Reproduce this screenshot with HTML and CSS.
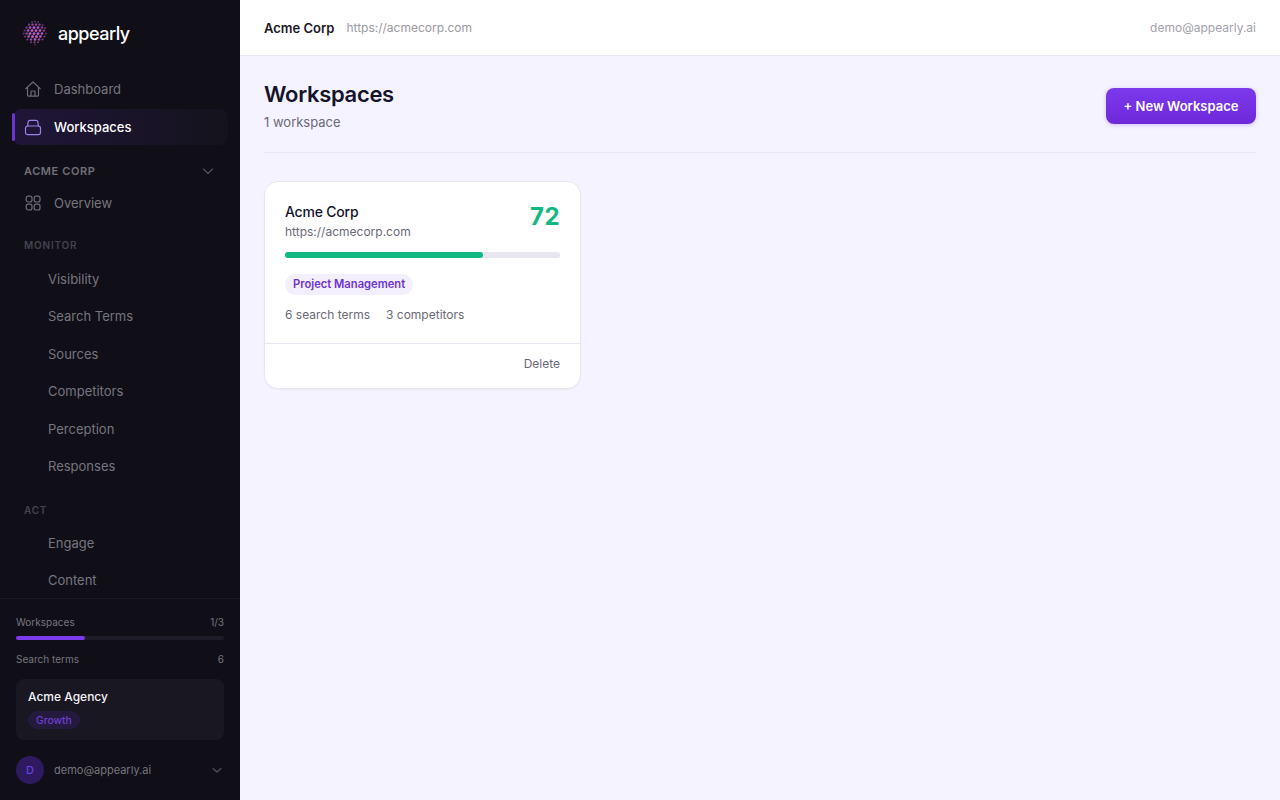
FILE: index.html
```html
<!DOCTYPE html>
<html lang="en">
<head>
	<meta charset="UTF-8">
	<title>Workspaces - appearly</title>
	<link rel="stylesheet" href="styles.css">
</head>
<body>
<div class="app">
	<aside class="sidebar">
		<div class="logo">
			<svg class="logo_mark" width="26" height="26" viewBox="0 0 26 26">
				<defs>
					<linearGradient id="logoGrad" x1="0" y1="0.1" x2="0.6" y2="1">
						<stop offset="0" stop-color="#2f3fe0"/>
						<stop offset="0.5" stop-color="#b85fd8"/>
						<stop offset="1" stop-color="#e0406a"/>
					</linearGradient>
					<radialGradient id="logoFade">
						<stop offset="0.45" stop-color="#100f17" stop-opacity="0"/>
						<stop offset="1" stop-color="#100f17" stop-opacity="0.65"/>
					</radialGradient>
				</defs>
				<g fill="url(#logoGrad)">
					<circle cx="10" cy="2" r="1"/><circle cx="13" cy="1.6" r="1"/><circle cx="16" cy="2" r="1"/>
					<circle cx="7" cy="4.5" r="1.2"/><circle cx="10.5" cy="4.5" r="1.3"/><circle cx="14" cy="4.5" r="1.3"/><circle cx="17.5" cy="4.5" r="1.2"/><circle cx="20.5" cy="5" r="1"/>
					<circle cx="4.5" cy="7.5" r="1.2"/><circle cx="8" cy="7.5" r="1.4"/><circle cx="12" cy="7.5" r="1.5"/><circle cx="16" cy="7.5" r="1.4"/><circle cx="20" cy="7.5" r="1.3"/><circle cx="23" cy="8" r="1"/>
					<circle cx="2.5" cy="10.5" r="1.1"/><circle cx="6" cy="10.5" r="1.4"/><circle cx="10" cy="10.5" r="1.5"/><circle cx="14" cy="10.5" r="1.5"/><circle cx="18" cy="10.5" r="1.4"/><circle cx="22" cy="10.5" r="1.2"/>
					<circle cx="1.5" cy="13.5" r="1"/><circle cx="4.5" cy="13.5" r="1.3"/><circle cx="8" cy="13.5" r="1.5"/><circle cx="12" cy="13.5" r="1.5"/><circle cx="16" cy="13.5" r="1.5"/><circle cx="20" cy="13.5" r="1.4"/><circle cx="24" cy="13.5" r="1"/>
					<circle cx="3" cy="16.5" r="1.1"/><circle cx="6.5" cy="16.5" r="1.4"/><circle cx="10.5" cy="16.5" r="1.5"/><circle cx="14.5" cy="16.5" r="1.5"/><circle cx="18.5" cy="16.5" r="1.4"/><circle cx="22.5" cy="16.5" r="1.1"/>
					<circle cx="5.5" cy="19.5" r="1.1"/><circle cx="9" cy="19.5" r="1.3"/><circle cx="13" cy="19.5" r="1.4"/><circle cx="17" cy="19.5" r="1.3"/><circle cx="20.5" cy="19.5" r="1.1"/>
					<circle cx="9" cy="22.3" r="1"/><circle cx="12.5" cy="22.3" r="1.1"/><circle cx="16" cy="22.3" r="1"/>
					<circle cx="13" cy="24.8" r="0.9"/>
				</g>
				<circle cx="13" cy="13" r="13" fill="url(#logoFade)"/>
			</svg>
			<span class="logo_text">appearly</span>
		</div>

		<nav class="nav">
			<a class="nav_item">
				<svg class="nav_icon" viewBox="0 0 18 18" width="18" height="18"><path d="M1.800 8.600 9 2l7.200 6.600M3.500 7.200v8a1 1 0 0 0 1 1h9a1 1 0 0 0 1-1v-8M7 16.200v-4.500a.7.7 0 0 1 .7-.7h2.600a.7.7 0 0 1 .7.7v4.500"/></svg>
				Dashboard
			</a>
			<a class="nav_item active">
				<svg class="nav_icon" viewBox="0 0 18 18" width="18" height="18"><rect x="1.500" y="8" width="15" height="8.700" rx="2.200"/><path d="M3.600 8 4.100 4.200C4.250 3.100 5 2.400 6 2.400h6c1 0 1.750.7 1.900 1.800L14.400 8"/></svg>
				Workspaces
			</a>

			<div class="group_head">
				<span>ACME CORP</span>
				<svg class="chevron" viewBox="0 0 12 12" width="12" height="12"><path d="M1.500 4 6 8.500 10.500 4"/></svg>
			</div>
			<a class="nav_item overview">
				<svg class="nav_icon" viewBox="0 0 18 18" width="18" height="18"><rect x="2.200" y="2.200" width="5.800" height="5.800" rx="2"/><rect x="10.200" y="2.200" width="5.800" height="5.800" rx="2"/><rect x="2.200" y="10.200" width="5.800" height="5.800" rx="2"/><rect x="10.200" y="10.200" width="5.800" height="5.800" rx="2"/></svg>
				Overview
			</a>

			<div class="section_label">MONITOR</div>
			<a class="sub_item">Visibility</a>
			<a class="sub_item">Search Terms</a>
			<a class="sub_item">Sources</a>
			<a class="sub_item">Competitors</a>
			<a class="sub_item">Perception</a>
			<a class="sub_item">Responses</a>

			<div class="section_label act">ACT</div>
			<a class="sub_item">Engage</a>
			<a class="sub_item">Content</a>
		</nav>

		<div class="side_foot">
			<div class="usage_row"><span>Workspaces</span><span>1/3</span></div>
			<div class="usage_bar"><div class="usage_fill"></div></div>
			<div class="usage_row terms"><span>Search terms</span><span>6</span></div>

			<div class="agency">
				<div class="agency_name">Acme Agency</div>
				<span class="agency_plan">Growth</span>
			</div>

			<div class="user">
				<span class="avatar">D</span>
				<span class="user_mail">demo@appearly.ai</span>
				<svg class="chevron" viewBox="0 0 12 12" width="12" height="12"><path d="M2 4.500 6 8 10 4.500"/></svg>
			</div>
		</div>
	</aside>

	<div class="main">
		<header class="topbar">
			<strong class="top_name">Acme Corp</strong>
			<span class="top_url">https://acmecorp.com</span>
			<span class="top_mail">demo@appearly.ai</span>
		</header>

		<section class="content">
			<div class="page_head">
				<div>
					<h1>Workspaces</h1>
					<p class="page_sub">1 workspace</p>
				</div>
				<button class="btn_new">+ New Workspace</button>
			</div>

			<div class="card">
				<div class="card_body">
					<div class="card_top">
						<div>
							<div class="card_name">Acme Corp</div>
							<div class="card_url">https://acmecorp.com</div>
						</div>
						<div class="card_score">72</div>
					</div>
					<div class="score_bar"><div class="score_fill" style="width: 72%"></div></div>
					<span class="tag">Project Management</span>
					<div class="card_stats"><span>6 search terms</span><span>3 competitors</span></div>
				</div>
				<div class="card_foot"><a class="delete">Delete</a></div>
			</div>
		</section>
	</div>
</div>
</body>
</html>
```

FILE: styles.css
```css
*{
	box-sizing: border-box;
}
html, body{
	margin: 0;
	height: 100%;
}
body{
	font-family: Inter, "Liberation Sans", sans-serif;
	background: #f5f3ff;
	overflow: hidden;
}
.app{
	display: flex;
	height: 800px;
}

/* sidebar */
.sidebar{
	width: 240px;
	flex: none;
	display: flex;
	flex-direction: column;
	background: #100f17;
	color: #fff;
}
.logo{
	height: 66px;
	flex: none;
	display: flex;
	align-items: center;
	gap: 10px;
	padding-left: 22px;
}
.logo_text{
	font-size: 18px;
	font-weight: 500;
	letter-spacing: -0.5px;
}
.nav{
	flex: 1;
	min-height: 0;
	overflow: hidden;
	padding: 5px 12px 0;
}
.nav_item{
	position: relative;
	display: flex;
	align-items: center;
	gap: 12px;
	height: 36px;
	margin-bottom: 2px;
	padding-left: 12px;
	border-radius: 8px;
	font-size: 13px;
	color: #77757f;
}
.nav_item.active{
	color: #fff;
	font-weight: 500;
	border-left: 2px solid transparent;
	padding-left: 10px;
	background: linear-gradient(90deg, #201538, #14131d) padding-box;
}
.nav_item.active::before{
	content: "";
	position: absolute;
	left: -2px;
	top: 4px;
	bottom: 4px;
	width: 2.5px;
	border-radius: 2px;
	background: #6d34d0;
}
.nav_icon{
	flex: none;
	fill: none;
	stroke: #6f6d78;
	stroke-width: 1.2;
	stroke-linecap: round;
	stroke-linejoin: round;
}
.active .nav_icon{
	stroke: #9a80ee;
}
.chevron{
	flex: none;
	fill: none;
	stroke: #55535d;
	stroke-width: 1.1;
	stroke-linecap: round;
	stroke-linejoin: round;
}
.group_head{
	display: flex;
	align-items: center;
	justify-content: space-between;
	height: 20px;
	margin-top: 16px;
	padding: 0 14px 0 12px;
	font-size: 11px;
	font-weight: 600;
	letter-spacing: 0.6px;
	color: #72707a;
}
.overview{
	margin-top: 4px;
}
.section_label{
	height: 16px;
	line-height: 16px;
	margin-top: 16px;
	margin-bottom: 7.5px;
	padding-left: 12px;
	font-size: 10px;
	font-weight: 600;
	letter-spacing: 0.8px;
	color: #45434d;
}
.section_label.act{
	margin-bottom: 7px;
}
.sub_item{
	display: block;
	height: 37.5px;
	line-height: 37.5px;
	padding-left: 36px;
	font-size: 13px;
	color: #77757f;
}

/* sidebar bottom */
.side_foot{
	flex: none;
	height: 202px;
	border-top: 1px solid #1c1b25;
	padding: 16px 16px 0;
}
.usage_row{
	display: flex;
	justify-content: space-between;
	height: 14px;
	line-height: 14px;
	font-size: 10px;
	color: #77757f;
}
.usage_row.terms{
	margin-top: 12px;
}
.usage_bar{
	height: 4px;
	margin-top: 7px;
	border-radius: 2px;
	background: #1e1c28;
}
.usage_fill{
	width: 33%;
	height: 100%;
	border-radius: 2px;
	background: #7c3aed;
}
.agency{
	height: 61px;
	margin-top: 13px;
	padding: 9px 12px 0;
	border-radius: 8px;
	background: #181722;
}
.agency_name{
	height: 17px;
	line-height: 17px;
	font-size: 12px;
	font-weight: 500;
	color: #f2f1f5;
}
.agency_plan{
	display: inline-block;
	height: 18px;
	line-height: 18px;
	margin-top: 6px;
	padding: 0 8px;
	border-radius: 9px;
	font-size: 10.3px;
	font-weight: 500;
	color: #6d3fd0;
	background: #241a3e;
}
.user{
	display: flex;
	align-items: center;
	margin-top: 16px;
	padding-right: 1px;
}
.avatar{
	width: 28px;
	height: 28px;
	flex: none;
	display: flex;
	align-items: center;
	justify-content: center;
	border-radius: 50%;
	font-size: 11px;
	font-weight: 500;
	color: #6d3fe0;
	background: #2e1a5e;
}
.user_mail{
	flex: 1;
	margin-left: 10px;
	font-size: 11px;
	color: #77757f;
}

/* top bar */
.main{
	flex: 1;
	min-width: 0;
}
.topbar{
	height: 56px;
	display: flex;
	align-items: center;
	padding: 0 24px;
	background: #fff;
	border-bottom: 1px solid #e8e6f0;
}
.top_name{
	font-size: 13px;
	font-weight: 600;
	color: #1a1825;
}
.top_url{
	margin-left: 12px;
	font-size: 12px;
	color: #9b99a5;
}
.top_mail{
	margin-left: auto;
	font-size: 12px;
	color: #a3a1ad;
}

/* page */
.content{
	padding: 24px;
}
.page_head{
	display: flex;
	justify-content: space-between;
	align-items: flex-start;
	height: 73px;
	border-bottom: 1px solid #e8e6f0;
	margin-bottom: 28px;
}
h1{
	margin: 0;
	font-size: 22px;
	line-height: 28px;
	font-weight: 600;
	letter-spacing: -0.3px;
	color: #16142a;
}
.page_sub{
	margin: 6px 0 0;
	font-size: 13px;
	line-height: 16px;
	color: #6b6978;
}
.btn_new{
	width: 150px;
	height: 36px;
	margin-top: 8px;
	border: 0;
	border-radius: 8px;
	font-family: inherit;
	font-size: 13px;
	font-weight: 600;
	color: #fff;
	background: linear-gradient(180deg, #7c3aed, #6d28d9);
	box-shadow: 0 1px 4px rgba(124, 58, 237, 0.3);
}

/* card */
.card{
	width: 317px;
	height: 208px;
	background: #fff;
	border: 1px solid #e8e6f0;
	border-radius: 14px;
	box-shadow: 0 1px 2px rgba(20, 16, 50, 0.04);
}
.card_body{
	height: 162px;
	padding: 20px 20px 0;
	border-bottom: 1px solid #e8e6f0;
}
.card_top{
	display: flex;
	justify-content: space-between;
	align-items: flex-start;
}
.card_name{
	font-size: 14px;
	line-height: 20px;
	font-weight: 500;
	letter-spacing: -0.2px;
	color: #16142a;
}
.card_url{
	margin-top: 2px;
	font-size: 12px;
	line-height: 16px;
	color: #6b6978;
}
.card_score{
	font-size: 24px;
	line-height: 30px;
	font-weight: 700;
	letter-spacing: 0.5px;
	color: #10b981;
}
.score_bar{
	height: 6px;
	margin-top: 12px;
	border-radius: 3px;
	background: #e8e6f0;
}
.score_fill{
	height: 100%;
	border-radius: 3px;
	background: #10b981;
}
.tag{
	display: inline-block;
	height: 21px;
	line-height: 21px;
	margin-top: 16px;
	padding: 0 8px;
	border-radius: 11px;
	font-size: 11.2px;
	font-weight: 600;
	color: #6d34d0;
	background: #f3effe;
}
.card_stats{
	display: flex;
	gap: 16px;
	margin-top: 12px;
	font-size: 12px;
	line-height: 16px;
	color: #6b6978;
}
.card_foot{
	display: flex;
	justify-content: flex-end;
	align-items: center;
	height: 44px;
	padding-right: 20px;
}
.delete{
	margin-top: -5px;
	font-size: 12px;
	color: #6b6978;
}
```
